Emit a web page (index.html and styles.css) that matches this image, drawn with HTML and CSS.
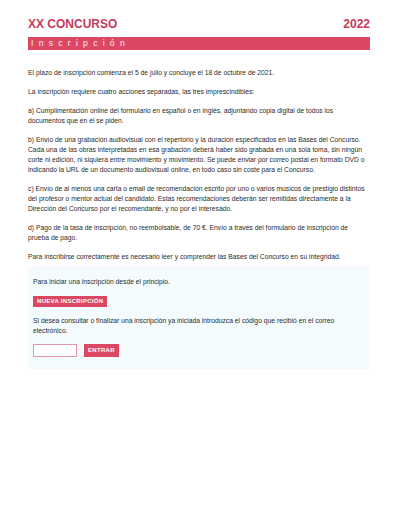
FILE: index.html
```
<!DOCTYPE html>
<html lang="es">
<head>
<meta charset="utf-8">
<title>XX Concurso - Inscripción</title>
<link rel="stylesheet" href="styles.css">
</head>
<body>
<div class="page">
  <header class="header">
    <div class="title-row">
      <h1 class="title">XX CONCURSO</h1>
      <span class="year">2022</span>
    </div>
    <div class="bar">Inscripción</div>
  </header>
  <main class="content">
    <p>El plazo de inscripción comienza el 5 de julio y concluye el 18 de octubre de 2021.</p>
    <p>La inscripción requiere cuatro acciones separadas, las tres imprescindibles:</p>
    <p>a) Cumplimentación online del formulario en español o en inglés, adjuntando copia digital de todos los documentos que en él se piden.</p>
    <p>b) Envío de una grabación audiovisual con el repertorio y la duración especificados en las Bases del Concurso. Cada una de las obras interpretadas en esa grabación deberá haber sido grabada en una sola toma, sin ningún corte ni edición, ni siquiera entre movimiento y movimiento. Se puede enviar por correo postal en formato DVD o indicando la URL de un documento audiovisual online, en todo caso sin coste para el Concurso.</p>
    <p>c) Envío de al menos una carta o email de recomendación escrito por uno o varios músicos de prestigio distintos del profesor o mentor actual del candidato. Estas recomendaciones deberán ser remitidas directamente a la Dirección del Concurso por el recomendante, y no por el interesado.</p>
    <p>d) Pago de la tasa de inscripción, no reembolsable, de 70 €. Envío a través del formulario de inscripción de prueba de pago.</p>
    <p>Para inscribirse correctamente es necesario leer y comprender las Bases del Concurso en su integridad.</p>
    <section class="box">
      <p>Para iniciar una inscripción desde el principio.</p>
      <div class="btn-row"><button class="btn">NUEVA INSCRIPCIÓN</button></div>
      <p>Si desea consultar o finalizar una inscripción ya iniciada introduzca el código que recibió en el correo electrónico.</p>
      <form class="code-form">
        <input class="code-input" type="text">
        <button class="btn" type="button">ENTRAR</button>
      </form>
    </section>
  </main>
</div>
</body>
</html>
```
FILE: styles.css
```
html, body {
  margin: 0;
  padding: 0;
  background: #ffffff;
}
body {
  font-family: "Liberation Sans", Arial, sans-serif;
  color: #2b2b2b;
}
.page {
  padding: 17px 30px 0 28px;
}
.title-row {
  display: flex;
  justify-content: space-between;
  align-items: baseline;
}
.title {
  margin: 0;
  font-size: 12px;
  line-height: 14px;
  font-weight: bold;
  color: #c63a5d;
}
.year {
  font-size: 12px;
  line-height: 14px;
  font-weight: bold;
  color: #c63a5d;
}
.bar {
  margin-top: 6px;
  height: 13px;
  background: #dc4864;
  color: #fbe9ed;
  font-size: 8.5px;
  line-height: 13px;
  letter-spacing: 5.3px;
  padding-left: 3px;
}
.content {
  padding-top: 18px;
  font-size: 6.75px;
  line-height: 10px;
}
.content p {
  margin: 0 0 9px 0;
}
.box {
  margin-top: -5px;
  background: #f4fbfd;
  padding: 11px 5px 12px 5px;
}
.box p {
  margin: 0;
}
.btn-row {
  margin: 9px 0 9px 0;
  display: flex;
}
.btn {
  font-family: "Liberation Sans", Arial, sans-serif;
  font-size: 6px;
  font-weight: bold;
  letter-spacing: 0.3px;
  color: #ffffff;
  background: #dc4864;
  border: none;
  padding: 0 4px;
  height: 11px;
  line-height: 11px;
  margin: 0;
}
.code-form {
  margin: 8px 0 0 0;
  display: flex;
  align-items: center;
  gap: 7px;
}
.code-form .btn {
  height: 13px;
  line-height: 13px;
}
.code-input {
  box-sizing: border-box;
  width: 44px;
  height: 13px;
  margin: 0;
  padding: 0 2px;
  border: 1px solid #e597a8;
  background: #ffffff;
  font-size: 7px;
}
```
